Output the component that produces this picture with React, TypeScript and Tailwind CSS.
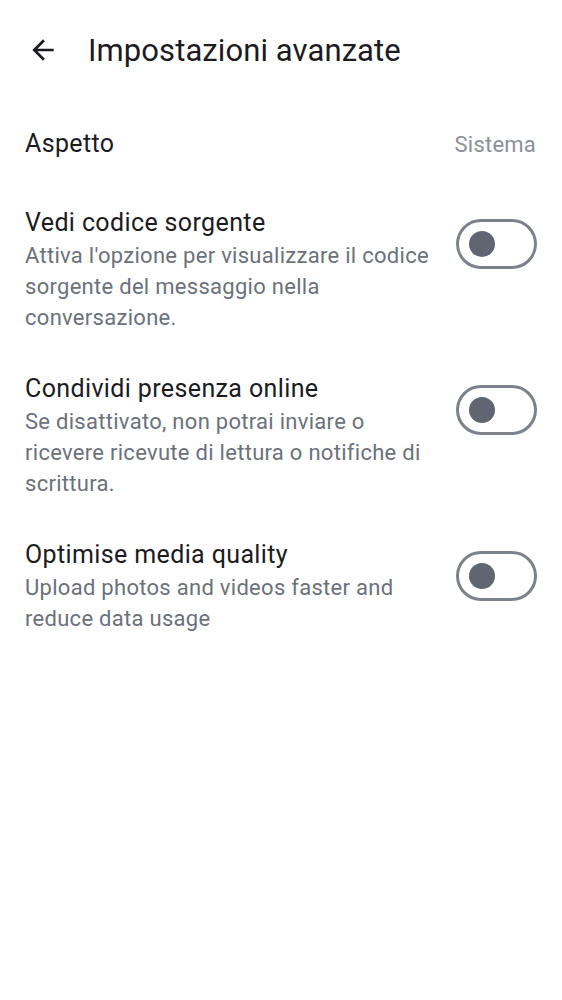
import { useState } from "react";

type Item = {
  title: string;
  description: string;
};

const items: Item[] = [
  {
    title: "Vedi codice sorgente",
    description:
      "Attiva l'opzione per visualizzare il codice sorgente del messaggio nella conversazione.",
  },
  {
    title: "Condividi presenza online",
    description:
      "Se disattivato, non potrai inviare o ricevere ricevute di lettura o notifiche di scrittura.",
  },
  {
    title: "Optimise media quality",
    description: "Upload photos and videos faster and reduce data usage",
  },
];

function Toggle({ on, onChange }: { on: boolean; onChange: () => void }) {
  return (
    <button
      onClick={onChange}
      className={`shrink-0 w-[81px] h-[50px] rounded-full border-[3px] flex items-center px-[10px] ${
        on ? "border-[#5f6672] bg-[#5f6672] justify-end" : "border-[#7b828c] bg-white justify-start"
      }`}
    >
      <span className={`w-[26px] h-[26px] rounded-full ${on ? "bg-white" : "bg-[#5f6672]"}`} />
    </button>
  );
}

export default function App() {
  const [state, setState] = useState([false, false, false]);

  return (
    <div className="min-h-screen bg-white font-['Roboto',sans-serif] text-[#1c1b1f]">
      {/* top bar */}
      <header className="h-[100px] flex items-center pl-[27px] gap-[29px]">
        <svg width="32" height="32" viewBox="0 0 24 24" fill="#1c1b1f">
          <path d="M20 11H7.83l5.59-5.59L12 4l-8 8 8 8 1.41-1.41L7.83 13H20v-2z" />
        </svg>
        <h1 className="text-[31px] leading-none tracking-[0.003em]">Impostazioni avanzate</h1>
      </header>

      <div className="px-[25px]">
        <div className="h-[88px] flex items-center justify-between">
          <span className="text-[25px] tracking-[0.015em]">Aspetto</span>
          <span className="text-[22px] text-[#8a909a] tracking-[0.01em] pr-[1px]">Sistema</span>
        </div>

        <div className="flex flex-col gap-[41px] pt-[20px]">
          {items.map((it, i) => (
            <div key={it.title} className="flex items-start justify-between gap-6">
              <div className="flex-1">
                <div className="text-[25px] leading-[30px] tracking-[0.015em]">{it.title}</div>
                <p className="mt-[2px] text-[22px] leading-[31px] text-[#6b717b] tracking-[0.013em]">
                  {it.description}
                </p>
              </div>
              <div className="mt-[11px]">
                <Toggle
                  on={state[i]}
                  onChange={() => setState((s) => s.map((v, j) => (j === i ? !v : v)))}
                />
              </div>
            </div>
          ))}
        </div>
      </div>
    </div>
  );
}
